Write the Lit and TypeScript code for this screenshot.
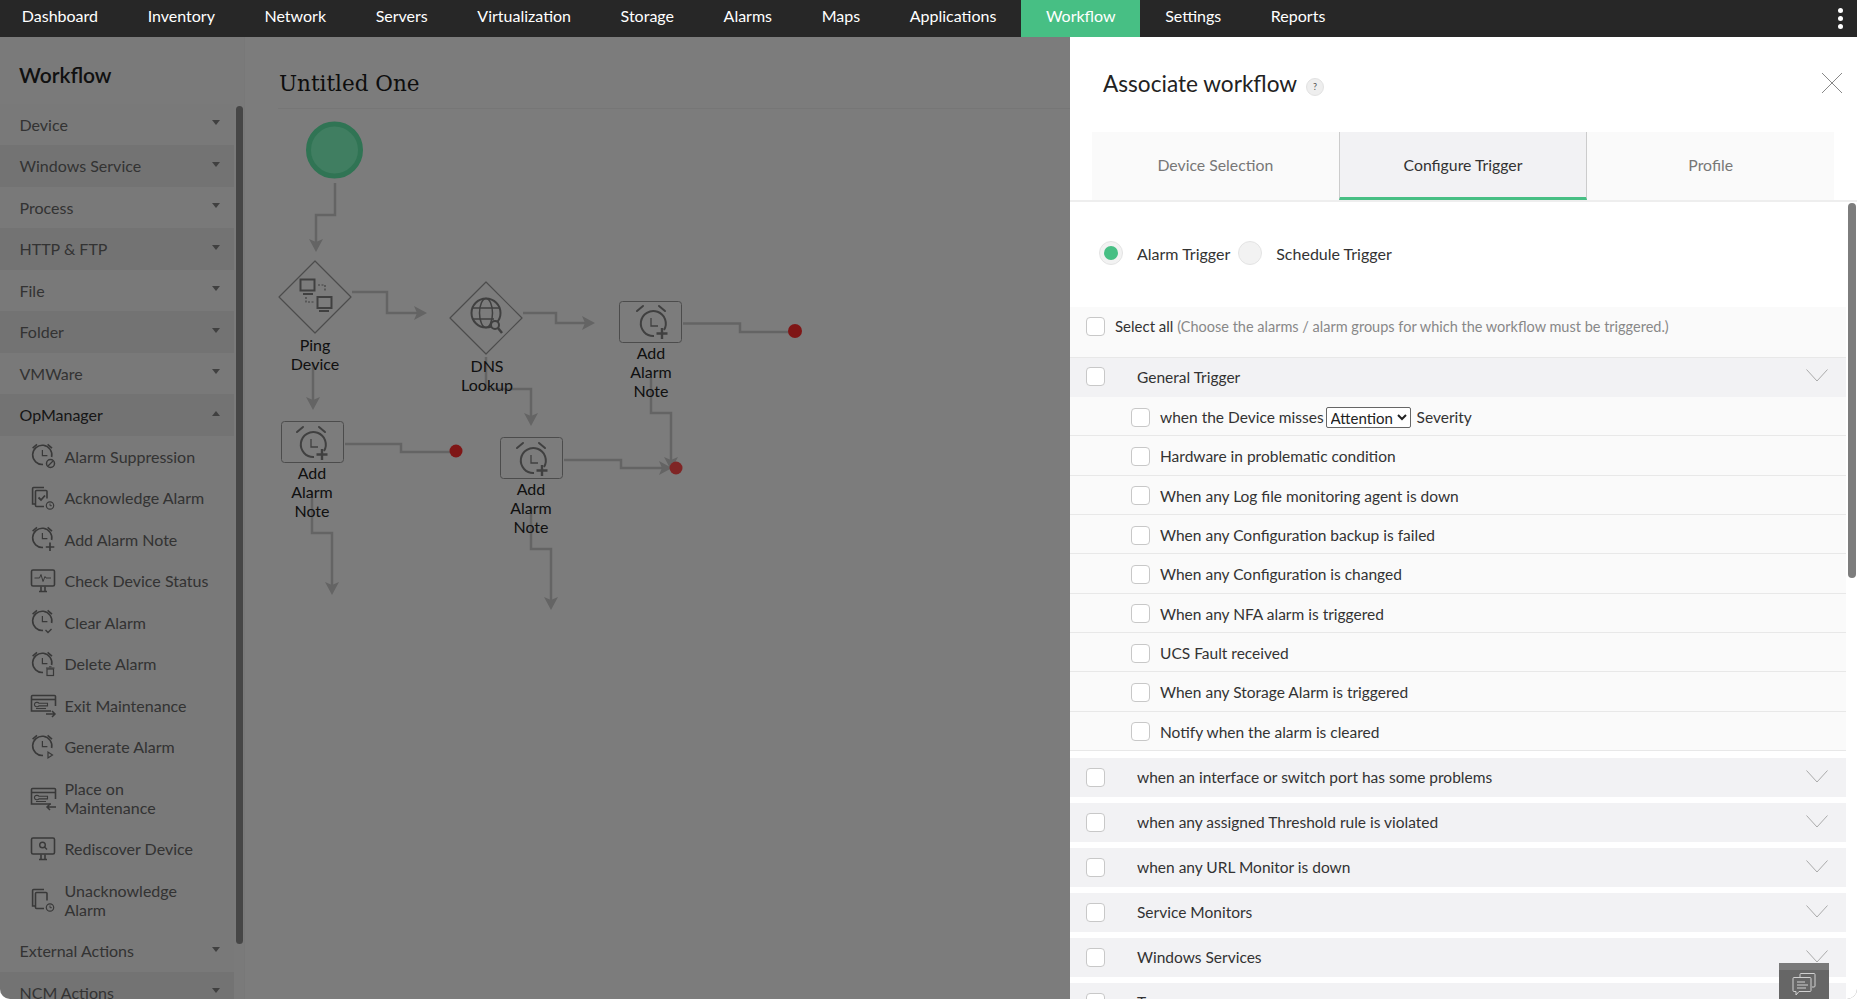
import { LitElement, html, css, svg } from "lit";
import { customElement } from "lit/decorators.js";

const clock = (badge: unknown) => svg`<svg class="ic" viewBox="0 0 28 28" fill="none" stroke="#727272" stroke-width="1.6">
  <path d="M22.6 15A9.6 9.6 0 1 0 14 22.4"/><path d="M3.6 6.2 8 2.4M23 6.2 18.6 2.4"/><path d="M13.4 8v5.6h5" stroke-width="1.2"/>${badge}</svg>`;
const monitor = (inner: unknown) => svg`<svg class="ic" viewBox="0 0 28 28" fill="none" stroke="#727272" stroke-width="1.6">
  <rect x="2.5" y="3" width="23" height="16" rx="1.5"/><path d="M10 24.5h8M12 19.5v5M16 19.5v5"/>${inner}</svg>`;
const maint = (arrow: unknown) => svg`<svg class="ic" viewBox="0 0 28 28" fill="none" stroke="#727272" stroke-width="1.6">
  <path d="M22 20H2.5V5.5a1 1 0 0 1 1-1h22a1 1 0 0 1 1 1V15"/><path d="M3 8.5h23"/>
  <path d="M5.5 13c.6-2 3.6-2 4.6-.7h8.4v2.6H10c-1 1.3-4 1.2-4.500-.8z" stroke-width="1.100"/><path d="M7 17.500h10" stroke-width="1.100"/>${arrow}</svg>`;
const docs = (check: boolean) => svg`<svg class="ic" viewBox="0 0 28 28" fill="none" stroke="#727272" stroke-width="1.6">
  <path d="M6 20H3.600V4.500a1 1 0 0 1 1-1H15"/><path d="M15 22.500H7.500a1 1 0 0 1-1-1V7.500a1 1 0 0 1 1-1h9.500a1 1 0 0 1 1 1v7"/>
  ${check ? svg`<path d="m9.500 13.500 2.500 2.500 4-4.500" stroke-width="1.800"/>` : null}
  <circle cx="21" cy="21.500" r="3.700" stroke-width="1.200"/><path d="M21 19.500v2.200h1.800" stroke-width="1"/></svg>`;

const icons: Record<string, unknown> = {
  suppress: clock(svg`<circle cx="21.500" cy="21.500" r="4" stroke-width="1.500"/><path d="m19 24 5-5" stroke-width="1.200"/>`),
  ack: docs(true),
  add: clock(svg`<path d="M21 17.500v8.500M16.800 22h8.500" stroke-width="1.700"/>`),
  check: monitor(svg`<path d="M5.500 11h5l1.500-3.500 2 7 2-5 1 1.500h5" stroke-width="1"/>`),
  clear: clock(svg`<path d="m16.500 22 2.500 2.500 3.500-3.500" stroke-width="1.400"/>`),
  del: clock(svg`<rect x="18" y="19" width="6.500" height="6.500" stroke-width="1.200"/><path d="M17 18h8.500M20 16.800h2.500" stroke-width="1"/>`),
  exit: maint(svg`<path d="M17 23h9M23 20l3 3-3 3" stroke-width="1.500"/>`),
  gen: clock(svg`<path d="M19 19v6l4.500-3z" stroke-width="1.200"/>`),
  place: maint(svg`<path d="M18 23h9M21 20l-3 3 3 3" stroke-width="1.500"/>`),
  redisc: monitor(svg`<circle cx="13.500" cy="10" r="2.800" stroke-width="1.400"/><path d="m15.500 12 2.500 2.500" stroke-width="1.400"/>`),
  unack: docs(false),
};

const NAV = ["Dashboard", "Inventory", "Network", "Servers", "Virtualization", "Storage", "Alarms", "Maps", "Applications", "Workflow", "Settings", "Reports"];
const TOP = ["Device", "Windows Service", "Process", "HTTP & FTP", "File", "Folder", "VMWare"];
const ITEMS: [string, string][] = [
  ["Alarm Suppression", "suppress"], ["Acknowledge Alarm", "ack"], ["Add Alarm Note", "add"], ["Check Device Status", "check"],
  ["Clear Alarm", "clear"], ["Delete Alarm", "del"], ["Exit Maintenance", "exit"], ["Generate Alarm", "gen"],
  ["Place on Maintenance", "place"], ["Rediscover Device", "redisc"], ["Unacknowledge Alarm", "unack"],
];
const SUBS = ["Hardware in problematic condition", "When any Log file monitoring agent is down", "When any Configuration backup is failed",
  "When any Configuration is changed", "When any NFA alarm is triggered", "UCS Fault received", "When any Storage Alarm is triggered", "Notify when the alarm is cleared"];
const GROUPS = ["when an interface or switch port has some problems", "when any assigned Threshold rule is violated", "when any URL Monitor is down", "Service Monitors", "Windows Services", "Traps"];

const LINES = ["M335 183V215H316V248", "M352 292H387V313H422", "M313 362V406", "M523 313H556V323H590", "M486 357V389H531V422",
  "M683 323.500H740V332H790", "M651 378V413H671V466", "M345 444H401V452H450", "M312 492V533H332V591", "M564 460H621V468H668", "M531 508V549H551V606"];
const ARROWS: [number, number, number][] = [[316, 252, 90], [427, 313, 0], [313, 410, 90], [595, 323, 0], [531, 426, 90], [671, 470, 90], [332, 595, 90], [551, 610, 90], [672, 468, 0]];
const NOTES: [number, number][] = [[619.5, 301.5], [281.5, 421.5], [500.5, 437.5]];
const LABELS: [number, number, string[]][] = [
  [315, 335, ["Ping", "Device"]], [487, 356, ["DNS", "Lookup"]], [651, 343, ["Add", "Alarm", "Note"]],
  [312, 463, ["Add", "Alarm", "Note"]], [531, 479, ["Add", "Alarm", "Note"]],
];

const alarmGlyph = (x: number, y: number) => svg`<g transform="translate(${x} ${y})" fill="none" stroke="#808080" stroke-width="2">
  <path d="M26 25A12.500 12.500 0 1 0 16 31"/><path d="M-1 6l6-5M27 6l-6-5" stroke-linecap="round"/><path d="M13 13v8h7" stroke-width="1.300"/><path d="M24 23v11M18.500 28.500h11" stroke-width="2.400"/></g>`;

const chev = svg`<svg class="chev" viewBox="0 0 22 13" fill="none" stroke="#aaa" stroke-width="1"><path d="M.5.500 11 12 21.500.500"/></svg>`;

@customElement("app-root")
export class AppRoot extends LitElement {
  static styles = css`
    :host { display: block; width: 1861px; height: 1002px; background: #fff; overflow: hidden; font-family: "Lato", "Noto Sans", sans-serif; }
    .frame { width: 1857px; height: 999px; display: flex; flex-direction: column; overflow: hidden; border-radius: 0 0 10px 10px; }
    nav { height: 37px; flex: none; background: #272727; display: flex; padding-left: 0; }
    nav a { padding: 0 24.800px; color: #fff; font-size: 16px; line-height: 32px; white-space: nowrap; }
    nav a:first-child { margin-left: -3px; }
    nav a.on { background: #47bf84; }
    nav .dots { margin-left: auto; width: 5px; margin-right: 14px; display: flex; flex-direction: column; justify-content: center; gap: 3px; }
    nav .dots i { width: 5px; height: 5px; border-radius: 50%; background: #fff; }
    .body { flex: 1; position: relative; display: flex; min-height: 0; background: #f8f8f8; }
    .side { width: 245px; flex: none; position: relative; overflow: hidden; border-right: 1px solid #f0f0f0; box-sizing: border-box; background: #f5f5f5; }
    .side h2 { margin: 0; height: 66.700px; padding: 0 0 0 19px; font-size: 21px; line-height: 75px; font-weight: 600; color: #222; }
    .menu { width: 234px; }
    .row { height: 41.500px; display: flex; align-items: center; justify-content: space-between; padding: 0 14px 0 19.500px; box-sizing: border-box; font-size: 16px; color: #666; background: #f2f2f2; }
    .row.alt { background: #e6e6e6; }
    .row.open { color: #2e2e2e; }
    .caret { width: 0; height: 0; border: 4px solid transparent; border-top: 5px solid #808080; border-bottom: 0; margin-top: -3px; }
    .caret.up { border-top: 0; border-bottom: 5px solid #808080; }
    .item { display: flex; align-items: center; padding: 11.250px 16px 11.250px 29px; font-size: 16px; line-height: 19px; color: #666; background: #f2f2f2; }
    .item span { margin-left: 7.500px; max-width: 148px; }
    .ic { width: 28px; height: 28px; flex: none; margin: -6px 0; }
    .sbar { position: absolute; left: 236px; top: 69px; width: 7px; height: 838px; border-radius: 4px; background: #8c8c8c; }
    .main { flex: 1; padding-left: 33px; }
    .main h1 { margin: 0; height: 72px; box-sizing: border-box; padding: 21px 0 0 1px; border-bottom: 1px solid #ececec; font: 400 21.500px/52px "DejaVu Serif", serif; color: #1a1a1a; }
    .canvas { position: absolute; left: 0; top: -37px; width: 1070px; height: 1036px; pointer-events: none; }
    .canvas svg { position: absolute; left: 0; top: 0; }
    .nlabel { position: absolute; transform: translateX(-50%); text-align: center; font-size: 16px; line-height: 19px; color: #222; }
    .scrim { position: absolute; inset: 0; background: rgba(0,0,0,.5); }
    .panel { position: absolute; right: 0; top: 0; bottom: 0; width: 787px; background: #fff; overflow: hidden; }
    .phead { height: 95px; display: flex; align-items: center; padding: 0 14px 0 33px; box-sizing: border-box; }
    .phead h3 { margin: -3px 0 0; font-size: 22.600px; font-weight: 400; color: #222; }
    .help { width: 16px; height: 16px; margin: 4px 0 0 9px; border-radius: 50%; background: #eee; border: 1px solid #e2e2e2; font-size: 9px; line-height: 16px; text-align: center; color: #555; }
    .close { margin-left: auto; width: 22px; height: 22px; margin-top: -4px; }
    .tabs { display: flex; margin: 0 23px 0 22px; height: 68px; }
    .tab { flex: 1; display: flex; align-items: center; justify-content: center; background: #fafafa; color: #777; font-size: 15.800px; box-sizing: border-box; padding-bottom: 3px; }
    .tab.on { background: #f2f2f4; color: #333; border-left: 1px solid #ccc; border-right: 1px solid #ccc; border-bottom: 3px solid #47bf84; padding-bottom: 0; }
    .content { border-top: 2px solid #eee; padding-right: 11px; }
    .radios { height: 105px; display: flex; align-items: center; padding-left: 29px; padding-bottom: 1px; box-sizing: border-box; font-size: 16px; color: #333; }
    .radio { width: 24px; height: 24px; border-radius: 50%; background: #f2f2f2; border: 1px solid #e4e4e4; box-sizing: border-box; display: flex; align-items: center; justify-content: center; margin-top: -2px; }
    .radio i { width: 14px; height: 14px; border-radius: 50%; background: #47bf84; }
    .radios .l1 { margin: -1px 8px 0 14px; }
    .radios .l2 { margin: -1px 0 0 14px; }
    .cb { width: 19px; height: 19px; flex: none; box-sizing: border-box; border: 1px solid #c8c8c8; border-radius: 4px; background: #fff; }
    .all { height: 51px; background: #fafafa; border-bottom: 1px solid #e8e8e8; box-sizing: border-box; display: flex; align-items: center; padding: 0 0 12px 16px; font-size: 15px; color: #333; }
    .all span { margin-left: 10px; }
    .all em { font-style: normal; color: #888; font-size: 14.500px; }
    .grp { height: 39px; background: #f2f2f4; display: flex; align-items: center; padding-left: 16px; font-size: 15.500px; color: #333; box-sizing: border-box; }
    .grp.first { padding-bottom: 2px; }
    .grp .t { margin-left: 32px; }
    .chev { margin-left: auto; margin-right: 18px; width: 22px; height: 13px; margin-top: -2px; }
    .sub { height: 39.330px; box-sizing: border-box; background: #fafafa; border-bottom: 1px solid #e8e8e8; display: flex; align-items: center; padding: 2px 0 0 61px; font-size: 15.500px; color: #333; }
    .sub > span { margin-left: 10px; }
    .sub select { font: 15px "Lato", sans-serif; height: 21px; width: 85px; margin: 0 6px 0 2px; padding: 0; background: #fff; color: #222; border: 1px solid #666; border-radius: 2px; }
    .groups { display: flex; flex-direction: column; gap: 6px; margin-top: 7px; }
    .pbar { position: absolute; right: 1px; top: 166px; width: 8px; height: 375px; border-radius: 4px; background: #7d7d7d; }
    .chat { position: absolute; right: 28px; bottom: 0; width: 50px; height: 36px; background: #666; border-top: 7px solid #7a7a7a; box-sizing: border-box; display: flex; align-items: center; justify-content: center; }
    .chat svg { width: 26px; height: 26px; margin-top: -2px; }
  `;

  render() {
    return html`<div class="frame">
      <nav>
        ${NAV.map((n) => html`<a class=${n === "Workflow" ? "on" : ""}>${n}</a>`)}
        <div class="dots"><i></i><i></i><i></i></div>
      </nav>
      <div class="body">
        <aside class="side">
          <h2>Workflow</h2>
          <div class="menu">
            ${TOP.map((t, i) => html`<div class="row ${i % 2 ? "alt" : ""}">${t}<i class="caret"></i></div>`)}
            <div class="row alt open">OpManager<i class="caret up"></i></div>
            ${ITEMS.map(([t, k]) => html`<div class="item">${icons[k]}<span>${t}</span></div>`)}
            <div class="row">External Actions<i class="caret"></i></div>
            <div class="row alt">NCM Actions<i class="caret"></i></div>
          </div>
          <div class="sbar"></div>
        </aside>
        <section class="main"><h1>Untitled One</h1></section>
        <div class="canvas">
          <svg width="1070" height="1036" viewBox="0 0 1070 1036">
            <circle cx="334.500" cy="150" r="26" fill="#80fcc2" stroke="#60e8a8" stroke-width="5"/>
            ${LINES.map((d) => svg`<path d=${d} fill="none" stroke="#c8c8c8" stroke-width="2.500"/>`)}
            ${ARROWS.map(([x, y, r]) => svg`<path transform="translate(${x} ${y}) rotate(${r})" d="M0 0-13-7-10 0-13 7z" fill="#c8c8c8"/>`)}
            <g fill="none" stroke="#999">
              <path d="M315 261 351 297 315 333 279 297z" stroke-linejoin="round" stroke-width="1.200"/>
              <path d="M486 282 522 318 486 354 450 318z" stroke-linejoin="round" stroke-width="1.200"/>
              ${NOTES.map(([x, y]) => svg`<rect x=${x} y=${y} width="62" height="41" rx="3" stroke="#999"/>`)}
            </g>
            ${alarmGlyph(638, 305)}${alarmGlyph(298, 426)}${alarmGlyph(518, 442)}
            <g fill="none" stroke="#808080" stroke-width="2">
              <rect x="300.500" y="279.500" width="14" height="11"/><path d="M303 294h10"/>
              <rect x="317.500" y="297" width="14" height="11"/><path d="M319 311h10"/>
              <path d="M318 285h7v6M306 297v5h9" stroke-width="1.200" stroke-dasharray="2 1.500"/>
              <circle cx="486" cy="313" r="14.500" /><ellipse cx="486" cy="313" rx="6.500" ry="14.500" stroke-width="1.500"/><path d="M472 308h28M472 319h22" stroke-width="1.500"/>
              <circle cx="495" cy="325" r="4" fill="#f8f8f8"/><path d="m498 328 4 5" stroke-width="2.500"/>
            </g>
            <circle cx="795" cy="331" r="7" fill="#ff2c2c"/><circle cx="456" cy="451" r="6.500" fill="#ff2c2c"/><circle cx="676" cy="468" r="6.500" fill="#ff4a4a"/>
          </svg>
          ${LABELS.map(([x, y, ls]) => html`<div class="nlabel" style="left:${x}px;top:${y}px">${ls.map((l) => html`${l}<br />`)}</div>`)}
        </div>
        <div class="scrim"></div>
        <div class="panel">
          <div class="phead">
            <h3>Associate workflow</h3><div class="help">?</div>
            <svg class="close" viewBox="0 0 22 22" fill="none" stroke="#888" stroke-width="1"><path d="M1 1 21 21M21 1 1 21"/></svg>
          </div>
          <div class="tabs"><div class="tab">Device Selection</div><div class="tab on">Configure Trigger</div><div class="tab">Profile</div></div>
          <div class="content">
            <div class="radios"><div class="radio"><i></i></div><span class="l1">Alarm Trigger</span><div class="radio"></div><span class="l2">Schedule Trigger</span></div>
            <div class="all"><div class="cb"></div><span>Select all <em>(Choose the alarms / alarm groups for which the workflow must be triggered.)</em></span></div>
            <div class="grp first"><div class="cb"></div><span class="t">General Trigger</span>${chev}</div>
            <div class="sub"><div class="cb"></div><span>when the Device misses</span><select><option>Attention</option></select>Severity</div>
            ${SUBS.map((s) => html`<div class="sub"><div class="cb"></div><span>${s}</span></div>`)}
            <div class="groups">${GROUPS.map((g) => html`<div class="grp"><div class="cb"></div><span class="t">${g}</span>${chev}</div>`)}</div>
          </div>
          <div class="pbar"></div>
          <div class="chat"><svg viewBox="0 0 26 26" fill="none" stroke="#d0d0d0" stroke-width="1"><path d="M9 6V3.500a1 1 0 0 1 1-1h13a1 1 0 0 1 1 1V15a1 1 0 0 1-1 1h-2"/><path d="M3 6.500h16a1 1 0 0 1 1 1v12a1 1 0 0 1-1 1H8l-3 3.500v-3.500H3a1 1 0 0 1-1-1v-12a1 1 0 0 1 1-1z"/><path d="M6 11h8M6 14h11M6 17h9"/></svg></div>
        </div>
      </div>
    </div>`;
  }
}
